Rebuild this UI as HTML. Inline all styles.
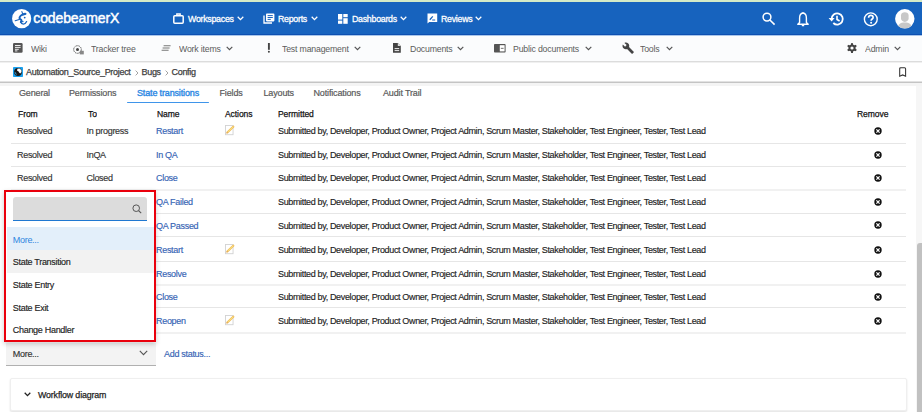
<!DOCTYPE html>
<html><head><meta charset="utf-8">
<style>
*{box-sizing:border-box;margin:0;padding:0}
html,body{width:922px;height:412px;overflow:hidden;background:#fff}
body{position:relative;font-family:"Liberation Sans",sans-serif;font-size:9px;color:#333}
.a{position:absolute}
.t{position:absolute;white-space:nowrap;font-size:9px;line-height:12px;letter-spacing:-0.3px}
.b{letter-spacing:-0.3px;-webkit-text-stroke-width:0.25px}
svg{position:absolute;overflow:visible}
#green{left:0;top:0;width:922px;height:2px;background:#d4eac7}
#hdr{left:0;top:2px;width:922px;height:32px;background:#1763be}
.hn{color:#fff;font-size:9.8px;letter-spacing:-0.3px;-webkit-text-stroke:0.3px #fff;transform:scaleX(0.9);transform-origin:0 50%}
.n2{color:#5c5c5c;font-size:9.5px;letter-spacing:-0.2px;transform:scaleX(0.92);transform-origin:0 50%}
.tab{color:#5a5a5a;letter-spacing:-0.15px;-webkit-text-stroke-width:0.2px}
.th{color:#111;font-size:9.5px;letter-spacing:-0.1px;transform:scaleX(0.9);transform-origin:0 50%}
.rw{color:#333;-webkit-text-stroke-width:0.15px}
.lk{color:#3563b4;-webkit-text-stroke-width:0.15px}
.sep{position:absolute;left:11px;width:895px;height:1px;background:#e6e6e6}
</style></head><body>
<div class="a" id="green"></div>
<div class="a" id="hdr"></div>
<div class="a" style="left:0;top:34px;width:922px;height:1px;background:#0d4fb0"></div>
<div class="a" style="left:0;top:35px;width:922px;height:1px;background:#a9c6ea"></div>

<!-- logo -->
<svg style="left:12.3px;top:9.1px" width="19.3" height="19.3" viewBox="0 0 19.3 19.3">
 <circle cx="9.65" cy="9.65" r="9.6" fill="#fff"/>
 <g fill="none" stroke="#1763be" stroke-linecap="round">
  <ellipse cx="12" cy="5.2" rx="2.6" ry="1.2" transform="rotate(-12 12 5.2)" fill="#1763be" stroke="none"/>
  <path d="M9.9 2.6 L10.5 4.4" stroke-width="1.1"/>
  <path d="M10.6 5.6 C7.6 6.8 6.6 9.4 8.6 10.4 C10.2 11.2 9.4 12.2 8.8 13" stroke-width="1.9"/>
  <path d="M8.8 13 C9.6 15.8 13 16.2 14.6 12.6" stroke-width="1.3"/>
  <path d="M7.2 10.4 L3.2 11.8" stroke-width="1.1"/>
 </g>
 <circle cx="12.7" cy="8.6" r="0.9" fill="#1763be"/>
 <circle cx="10.8" cy="12.6" r="0.8" fill="#1763be"/>
</svg>
<div class="t" style="left:33.3px;top:9.1px;font-size:14px;line-height:18px;color:#fff;letter-spacing:-0.12px;-webkit-text-stroke:0.45px #fff">codebeamerX</div>

<!-- header nav -->
<svg style="left:173px;top:13px" width="11" height="11" viewBox="0 0 11 11"><rect x="0.8" y="2.8" width="9.4" height="7.4" rx="1" fill="none" stroke="#fff" stroke-width="1.5"/><path d="M3.8 2.8 V1 H7.2 V2.8" fill="none" stroke="#fff" stroke-width="1.3"/></svg>
<div class="t hn" style="left:188px;top:13.0px">Workspaces</div>
<svg style="left:236.6px;top:15.9px" width="7" height="5" viewBox="0 0 7 5"><path d="M0.7 0.8 L3.5 3.6 L6.3 0.8" fill="none" stroke="#fff" stroke-width="1.3"/></svg>

<svg style="left:263px;top:13px" width="12" height="11" viewBox="0 0 12 11"><path d="M1 2.5 V10 H9" fill="none" stroke="#fff" stroke-width="1.3"/><rect x="3" y="0.6" width="8.4" height="7.8" rx="0.8" fill="#fff"/><path d="M4.6 2.6 H9.8 M4.6 4.5 H9.8 M4.6 6.4 H7.8" stroke="#1763be" stroke-width="1"/></svg>
<div class="t hn" style="left:278px;top:13.0px">Reports</div>
<svg style="left:310.6px;top:15.9px" width="7" height="5" viewBox="0 0 7 5"><path d="M0.7 0.8 L3.5 3.6 L6.3 0.8" fill="none" stroke="#fff" stroke-width="1.3"/></svg>

<svg style="left:338px;top:14px" width="10" height="10" viewBox="0 0 10 10"><rect x="0" y="0" width="4.3" height="5.6" fill="#fff"/><rect x="0" y="6.6" width="4.3" height="3.2" fill="#fff"/><rect x="5.3" y="0" width="4.4" height="3.2" fill="#fff"/><rect x="5.3" y="4.2" width="4.4" height="5.6" fill="#fff"/></svg>
<div class="t hn" style="left:352px;top:13.0px">Dashboards</div>
<svg style="left:399.6px;top:15.9px" width="7" height="5" viewBox="0 0 7 5"><path d="M0.7 0.8 L3.5 3.6 L6.3 0.8" fill="none" stroke="#fff" stroke-width="1.3"/></svg>

<svg style="left:427px;top:13px" width="11" height="11" viewBox="0 0 11 11"><path d="M0.5 0.5 H10.2 V9 H2.2 L0.5 10.6 Z" fill="#fff"/><path d="M2.8 6.8 L5.8 3.4" stroke="#1763be" stroke-width="1.3"/><path d="M5.2 7 H8.2" stroke="#1763be" stroke-width="1"/></svg>
<div class="t hn" style="left:441px;top:13.0px">Reviews</div>
<svg style="left:474.6px;top:15.9px" width="7" height="5" viewBox="0 0 7 5"><path d="M0.7 0.8 L3.5 3.6 L6.3 0.8" fill="none" stroke="#fff" stroke-width="1.3"/></svg>

<!-- right header icons -->
<svg style="left:762px;top:12px" width="14" height="14" viewBox="0 0 14 14"><circle cx="5" cy="5.1" r="3.9" fill="none" stroke="#fff" stroke-width="1.5"/><path d="M7.9 8 L12.6 12.6" stroke="#fff" stroke-width="1.6"/></svg>
<svg style="left:797px;top:11.5px" width="12" height="15" viewBox="0 0 12 15"><path d="M6 1 C3.2 1.5 2.6 3.5 2.6 6 V10.6 L0.8 12.2 H11.2 L9.4 10.6 V6 C9.4 3.5 8.8 1.5 6 1 Z" fill="none" stroke="#fff" stroke-width="1.4" stroke-linejoin="round"/><path d="M4.8 13.6 H7.2" stroke="#fff" stroke-width="1.3"/><circle cx="6" cy="1" r="0.8" fill="#fff"/></svg>
<svg style="left:828px;top:12px" width="17" height="14" viewBox="0 0 17 14"><path d="M3.6 7 A5.6 5.6 0 1 1 5.3 11" fill="none" stroke="#fff" stroke-width="1.8"/><path d="M0.6 6 L3.6 9.4 L6.6 6 Z" fill="#fff"/><path d="M9 3.8 V7.5 L11.6 9" fill="none" stroke="#fff" stroke-width="1.6"/></svg>
<svg style="left:863px;top:11.5px" width="16" height="15" viewBox="0 0 16 15"><circle cx="7.8" cy="7.3" r="6.4" fill="none" stroke="#fff" stroke-width="1.4"/><path d="M5.6 5.7 C5.6 3.9 6.7 3.3 7.8 3.3 C9.1 3.3 10.1 4.1 10.1 5.4 C10.1 7 8.1 7 8.1 8.8" fill="none" stroke="#fff" stroke-width="1.7"/><circle cx="8.1" cy="10.7" r="1" fill="#fff"/></svg>
<svg style="left:894.8px;top:8.8px" width="19.6" height="19.6" viewBox="0 0 19.6 19.6"><defs><clipPath id="av"><circle cx="9.8" cy="9.8" r="9.7"/></clipPath></defs><circle cx="9.8" cy="9.8" r="9.7" fill="#fff"/><g clip-path="url(#av)" fill="#c8c8c8"><path d="M6 6.6 C6 3.9 7.7 3.2 9.8 3.2 C11.9 3.2 13.6 3.9 13.6 6.6 V9.6 C13.6 11.4 12 13 9.8 13 C7.6 13 6 11.4 6 9.6 Z"/><path d="M2.6 19.6 C2.8 15.2 5.2 13.4 9.8 13.4 C14.4 13.4 16.8 15.2 17 19.6 Z"/></g></svg>

<!-- second nav -->
<div class="a" style="left:0;top:36px;width:922px;height:25px;background:#fbfcfd"></div>
<div class="a" style="left:0;top:61px;width:922px;height:1px;background:#dcdcdc"></div>
<div class="a" style="left:0;top:62px;width:922px;height:1px;background:#f0f0f0"></div>

<svg style="left:13px;top:43px" width="10" height="10" viewBox="0 0 10 10"><rect x="0" y="0" width="9.6" height="9.8" rx="1.2" fill="#555"/><path d="M2 2.5 H7.6 M2 4.4 H7.6 M2 6.3 H5.8 M2 7.9 H4.4" stroke="#fff" stroke-width="0.9"/></svg>
<div class="t n2" style="left:31px;top:42.8px">Wiki</div>
<svg style="left:73px;top:44.5px" width="12" height="10" viewBox="0 0 12 10"><circle cx="4.5" cy="4.5" r="3.8" fill="none" stroke="#555" stroke-width="1" stroke-dasharray="1.5 0.8"/><circle cx="4.5" cy="4.5" r="1.5" fill="#444"/><rect x="6.8" y="5.8" width="4" height="3.6" fill="#888"/></svg>
<div class="t n2" style="left:90.5px;top:42.8px">Tracker tree</div>
<svg style="left:161px;top:45px" width="11" height="7" viewBox="0 0 11 7"><path d="M2.6 0.8 H9.6 M1.6 3 H8.6 M0.6 5.2 H7.6" stroke="#777" stroke-width="1.1"/></svg>
<div class="t n2" style="left:179px;top:42.8px">Work items</div>
<svg style="left:226px;top:45.7px" width="7" height="5" viewBox="0 0 7 5"><path d="M0.7 0.8 L3.5 3.6 L6.3 0.8" fill="none" stroke="#555" stroke-width="1.2"/></svg>
<svg style="left:267px;top:43px" width="4" height="10" viewBox="0 0 4 10"><path d="M1.9 0 V6.8" stroke="#444" stroke-width="1.9"/><circle cx="1.9" cy="8.8" r="1" fill="#444"/></svg>
<div class="t n2" style="left:282px;top:42.8px">Test management</div>
<svg style="left:354px;top:45.7px" width="7" height="5" viewBox="0 0 7 5"><path d="M0.7 0.8 L3.5 3.6 L6.3 0.8" fill="none" stroke="#555" stroke-width="1.2"/></svg>
<svg style="left:393px;top:43px" width="8" height="10" viewBox="0 0 8 10"><path d="M0 0 H4.8 L7.8 3 V9.8 H0 Z" fill="#444"/><path d="M4.8 0 V3 H7.8" fill="#ddd"/><path d="M1.6 5.6 H6.2 M1.6 7.6 H6.2" stroke="#fff" stroke-width="0.9"/></svg>
<div class="t n2" style="left:409.5px;top:42.8px">Documents</div>
<svg style="left:457px;top:45.7px" width="7" height="5" viewBox="0 0 7 5"><path d="M0.7 0.8 L3.5 3.6 L6.3 0.8" fill="none" stroke="#555" stroke-width="1.2"/></svg>
<svg style="left:494px;top:44px" width="12" height="9" viewBox="0 0 12 9"><rect x="0" y="0" width="11.6" height="8.6" rx="0.8" fill="#555"/><rect x="5.8" y="1.2" width="4.8" height="6.2" fill="#fff"/><path d="M6.8 4.4 H9.6" stroke="#888" stroke-width="1.2"/></svg>
<div class="t n2" style="left:513px;top:42.8px">Public documents</div>
<svg style="left:585px;top:45.7px" width="7" height="5" viewBox="0 0 7 5"><path d="M0.7 0.8 L3.5 3.6 L6.3 0.8" fill="none" stroke="#555" stroke-width="1.2"/></svg>
<svg style="left:621.6px;top:42px" width="12.4" height="12.4" viewBox="0 0 24 24"><g transform="scale(1)"><path d="M22.7 19l-9.1-9.1c.9-2.3.4-5-1.5-6.9-2-2-5-2.4-7.4-1.3L9 6 6 9 1.6 4.7C.4 7.1.9 10.1 2.9 12.1c1.9 1.9 4.6 2.4 6.9 1.5l9.1 9.1c.4.4 1 .4 1.4 0l2.3-2.3c.5-.4.5-1.1.1-1.4z" fill="#444"/></g></svg>
<div class="t n2" style="left:640px;top:42.8px">Tools</div>
<svg style="left:666px;top:45.7px" width="7" height="5" viewBox="0 0 7 5"><path d="M0.7 0.8 L3.5 3.6 L6.3 0.8" fill="none" stroke="#555" stroke-width="1.2"/></svg>
<svg style="left:847px;top:43px" width="10" height="10" viewBox="0 0 10 10"><g fill="#444"><circle cx="5" cy="5" r="3.6"/><rect x="4" y="0" width="2" height="10" rx="0.6"/><rect x="4" y="0" width="2" height="10" rx="0.6" transform="rotate(60 5 5)"/><rect x="4" y="0" width="2" height="10" rx="0.6" transform="rotate(120 5 5)"/></g><circle cx="5" cy="5" r="1.6" fill="#fbfcfd"/></svg>
<div class="t n2" style="left:865px;top:42.8px">Admin</div>
<svg style="left:894px;top:45.7px" width="7" height="5" viewBox="0 0 7 5"><path d="M0.7 0.8 L3.5 3.6 L6.3 0.8" fill="none" stroke="#555" stroke-width="1.2"/></svg>

<!-- breadcrumb -->
<svg style="left:13px;top:66.5px" width="10" height="10" viewBox="0 0 10 10"><rect x="0" y="0" width="10" height="10" rx="0.8" fill="#1aa0ee"/><circle cx="5" cy="5" r="3.9" fill="#1a1a1a"/><path d="M4.4 1.7 L6.4 1.5 L8.3 3.1 L8.5 5.1 L7.2 6.6 L6.1 5.6 L5.4 4.3 L4.1 3.7 Z" fill="#fff"/><path d="M2.1 5.2 L3.3 7.6" stroke="#3ab0f0" stroke-width="0.9"/></svg>
<div class="t b" style="left:26px;top:65.9px;color:#404040">Automation_Source_Project</div>
<svg style="left:135px;top:69.5px" width="4" height="6" viewBox="0 0 4 6"><path d="M0.6 0.6 L3 3 L0.6 5.4" fill="none" stroke="#999" stroke-width="0.9"/></svg>
<div class="t b" style="left:141.5px;top:65.9px;color:#404040">Bugs</div>
<svg style="left:165px;top:69.5px" width="4" height="6" viewBox="0 0 4 6"><path d="M0.6 0.6 L3 3 L0.6 5.4" fill="none" stroke="#999" stroke-width="0.9"/></svg>
<div class="t b" style="left:171.5px;top:65.9px;color:#404040">Config</div>
<svg style="left:898.5px;top:66.8px" width="8" height="10" viewBox="0 0 8 10"><path d="M0.7 1.7 Q0.7 0.7 1.7 0.7 H5.6 Q6.6 0.7 6.6 1.7 V9.2 L3.65 7.9 L0.7 9.2 Z" fill="none" stroke="#333" stroke-width="1.05"/></svg>
<div class="a" style="left:0;top:81px;width:922px;height:1px;background:#e2e2e2"></div><div class="a" style="left:0;top:82px;width:922px;height:1px;background:#c4c4c4"></div>
<div class="a" style="left:0;top:83px;width:922px;height:3px;background:#f4f4f4"></div>

<!-- tabs -->
<div class="t tab" style="left:19px;top:86.5px">General</div>
<div class="t tab" style="left:69px;top:86.5px">Permissions</div>
<div class="t tab" style="left:137px;top:86.5px;color:#2a87e3;-webkit-text-stroke-width:0.35px">State transitions</div>
<div class="t tab" style="left:219.5px;top:86.5px">Fields</div>
<div class="t tab" style="left:263.5px;top:86.5px">Layouts</div>
<div class="t tab" style="left:313.5px;top:86.5px">Notifications</div>
<div class="t tab" style="left:383px;top:86.5px">Audit Trail</div>
<div class="a" style="left:126.5px;top:101.5px;width:82.5px;height:1.6px;background:#3f95ea;border-radius:1px"></div>

<!-- table header -->
<div class="t b th" style="left:18px;top:108.0px">From</div>
<div class="t b th" style="left:87.5px;top:108.0px">To</div>
<div class="t b th" style="left:157px;top:108.0px">Name</div>
<div class="t b th" style="left:224.5px;top:108.0px">Actions</div>
<div class="t b th" style="left:278px;top:108.0px">Permitted</div>
<div class="t b th" style="left:856.5px;top:108.0px">Remove</div>

<!-- rows -->
<div class="t rw" style="left:17px;top:125.1px">Resolved</div>
<div class="t rw" style="left:86.5px;top:125.1px">In progress</div>
<div class="t lk" style="left:156px;top:125.1px">Restart</div>
<svg style="left:225px;top:125.0px" width="10" height="10" viewBox="0 0 10 10"><rect x="0.45" y="0.5" width="7.6" height="9.2" fill="#fff" stroke="#d2d2d2" stroke-width="0.9"/><path d="M2.3 7.5 L8.3 1.7" stroke="#f0bf62" stroke-width="2.2" stroke-linecap="round"/><path d="M2.6 7.2 L8 2" stroke="#fae27c" stroke-width="1" stroke-linecap="round"/><path d="M1.5 8.3 L2.6 7.2" stroke="#d9a060" stroke-width="1"/></svg>
<div class="t rw" style="left:278px;top:125.1px;color:#222;letter-spacing:-0.35px">Submitted by, Developer, Product Owner, Project Admin, Scrum Master, Stakeholder, Test Engineer, Tester, Test Lead</div>
<svg style="left:874.2px;top:127.0px" width="8" height="8" viewBox="0 0 8 8"><circle cx="4" cy="4" r="3.7" fill="#111"/><path d="M2.4 2.4 L5.6 5.6 M5.6 2.4 L2.4 5.6" stroke="#fff" stroke-width="1.25"/></svg>
<div class="sep" style="top:143px"></div>
<div class="t rw" style="left:17px;top:149.1px">Resolved</div>
<div class="t rw" style="left:86.5px;top:149.1px">InQA</div>
<div class="t lk" style="left:156px;top:149.1px">In QA</div>
<div class="t rw" style="left:278px;top:149.1px;color:#222;letter-spacing:-0.35px">Submitted by, Developer, Product Owner, Project Admin, Scrum Master, Stakeholder, Test Engineer, Tester, Test Lead</div>
<svg style="left:874.2px;top:151.0px" width="8" height="8" viewBox="0 0 8 8"><circle cx="4" cy="4" r="3.7" fill="#111"/><path d="M2.4 2.4 L5.6 5.6 M5.6 2.4 L2.4 5.6" stroke="#fff" stroke-width="1.25"/></svg>
<div class="sep" style="top:166px"></div>
<div class="t rw" style="left:17px;top:172.4px">Resolved</div>
<div class="t rw" style="left:86.5px;top:172.4px">Closed</div>
<div class="t lk" style="left:156px;top:172.4px">Close</div>
<div class="t rw" style="left:278px;top:172.4px;color:#222;letter-spacing:-0.35px">Submitted by, Developer, Product Owner, Project Admin, Scrum Master, Stakeholder, Test Engineer, Tester, Test Lead</div>
<svg style="left:874.2px;top:174.3px" width="8" height="8" viewBox="0 0 8 8"><circle cx="4" cy="4" r="3.7" fill="#111"/><path d="M2.4 2.4 L5.6 5.6 M5.6 2.4 L2.4 5.6" stroke="#fff" stroke-width="1.25"/></svg>
<div class="sep" style="top:189px;height:2px;background:#f1f1f1"></div>
<div class="t lk" style="left:156px;top:195.9px">QA Failed</div>
<div class="t rw" style="left:278px;top:195.9px;color:#222;letter-spacing:-0.35px">Submitted by, Developer, Product Owner, Project Admin, Scrum Master, Stakeholder, Test Engineer, Tester, Test Lead</div>
<svg style="left:874.2px;top:197.8px" width="8" height="8" viewBox="0 0 8 8"><circle cx="4" cy="4" r="3.7" fill="#111"/><path d="M2.4 2.4 L5.6 5.6 M5.6 2.4 L2.4 5.6" stroke="#fff" stroke-width="1.25"/></svg>
<div class="sep" style="top:213px"></div>
<div class="t lk" style="left:156px;top:219.5px">QA Passed</div>
<div class="t rw" style="left:278px;top:219.5px;color:#222;letter-spacing:-0.35px">Submitted by, Developer, Product Owner, Project Admin, Scrum Master, Stakeholder, Test Engineer, Tester, Test Lead</div>
<svg style="left:874.2px;top:221.4px" width="8" height="8" viewBox="0 0 8 8"><circle cx="4" cy="4" r="3.7" fill="#111"/><path d="M2.4 2.4 L5.6 5.6 M5.6 2.4 L2.4 5.6" stroke="#fff" stroke-width="1.25"/></svg>
<div class="sep" style="top:236px"></div>
<div class="t lk" style="left:156px;top:243.6px">Restart</div>
<svg style="left:225px;top:243.5px" width="10" height="10" viewBox="0 0 10 10"><rect x="0.45" y="0.5" width="7.6" height="9.2" fill="#fff" stroke="#d2d2d2" stroke-width="0.9"/><path d="M2.3 7.5 L8.3 1.7" stroke="#f0bf62" stroke-width="2.2" stroke-linecap="round"/><path d="M2.6 7.2 L8 2" stroke="#fae27c" stroke-width="1" stroke-linecap="round"/><path d="M1.5 8.3 L2.6 7.2" stroke="#d9a060" stroke-width="1"/></svg>
<div class="t rw" style="left:278px;top:243.6px;color:#222;letter-spacing:-0.35px">Submitted by, Developer, Product Owner, Project Admin, Scrum Master, Stakeholder, Test Engineer, Tester, Test Lead</div>
<svg style="left:874.2px;top:245.5px" width="8" height="8" viewBox="0 0 8 8"><circle cx="4" cy="4" r="3.7" fill="#111"/><path d="M2.4 2.4 L5.6 5.6 M5.6 2.4 L2.4 5.6" stroke="#fff" stroke-width="1.25"/></svg>
<div class="sep" style="top:261px"></div>
<div class="t lk" style="left:156px;top:267.7px">Resolve</div>
<div class="t rw" style="left:278px;top:267.7px;color:#222;letter-spacing:-0.35px">Submitted by, Developer, Product Owner, Project Admin, Scrum Master, Stakeholder, Test Engineer, Tester, Test Lead</div>
<svg style="left:874.2px;top:269.6px" width="8" height="8" viewBox="0 0 8 8"><circle cx="4" cy="4" r="3.7" fill="#111"/><path d="M2.4 2.4 L5.6 5.6 M5.6 2.4 L2.4 5.6" stroke="#fff" stroke-width="1.25"/></svg>
<div class="sep" style="top:284px;height:2px;background:#f1f1f1"></div>
<div class="t lk" style="left:156px;top:290.7px">Close</div>
<div class="t rw" style="left:278px;top:290.7px;color:#222;letter-spacing:-0.35px">Submitted by, Developer, Product Owner, Project Admin, Scrum Master, Stakeholder, Test Engineer, Tester, Test Lead</div>
<svg style="left:874.2px;top:292.6px" width="8" height="8" viewBox="0 0 8 8"><circle cx="4" cy="4" r="3.7" fill="#111"/><path d="M2.4 2.4 L5.6 5.6 M5.6 2.4 L2.4 5.6" stroke="#fff" stroke-width="1.25"/></svg>
<div class="sep" style="top:307px"></div>
<div class="t lk" style="left:156px;top:314.7px">Reopen</div>
<svg style="left:225px;top:314.6px" width="10" height="10" viewBox="0 0 10 10"><rect x="0.45" y="0.5" width="7.6" height="9.2" fill="#fff" stroke="#d2d2d2" stroke-width="0.9"/><path d="M2.3 7.5 L8.3 1.7" stroke="#f0bf62" stroke-width="2.2" stroke-linecap="round"/><path d="M2.6 7.2 L8 2" stroke="#fae27c" stroke-width="1" stroke-linecap="round"/><path d="M1.5 8.3 L2.6 7.2" stroke="#d9a060" stroke-width="1"/></svg>
<div class="t rw" style="left:278px;top:314.7px;color:#222;letter-spacing:-0.35px">Submitted by, Developer, Product Owner, Project Admin, Scrum Master, Stakeholder, Test Engineer, Tester, Test Lead</div>
<svg style="left:874.2px;top:316.6px" width="8" height="8" viewBox="0 0 8 8"><circle cx="4" cy="4" r="3.7" fill="#111"/><path d="M2.4 2.4 L5.6 5.6 M5.6 2.4 L2.4 5.6" stroke="#fff" stroke-width="1.25"/></svg>
<div class="sep" style="top:332px;height:2px;background:#f1f1f1"></div>

<!-- below table -->
<div class="a" style="left:6px;top:343px;width:150px;height:23px;background:#f3f3f3;border-bottom:1px solid #b0b0b0"></div>
<div class="t rw" style="left:12.8px;top:347.6px;color:#333">More...</div>
<svg style="left:139px;top:349.8px" width="9" height="6" viewBox="0 0 9 6"><path d="M0.8 0.8 L4.5 4.6 L8.2 0.8" fill="none" stroke="#555" stroke-width="1.1"/></svg>
<div class="t lk" style="left:164px;top:347.9px">Add status...</div>

<div class="a" style="left:10px;top:377.5px;width:896.5px;height:33.5px;background:#fff;border:1px solid #efefef;border-radius:2px;box-shadow:0 1px 2px rgba(0,0,0,0.12)"></div>
<svg style="left:23.7px;top:392.3px" width="7" height="5" viewBox="0 0 7 5"><path d="M0.7 0.8 L3.5 3.6 L6.3 0.8" fill="none" stroke="#222" stroke-width="1.3"/></svg>
<div class="t rw" style="left:38px;top:389.0px;color:#222;-webkit-text-stroke:0.25px #222;font-size:9.5px;letter-spacing:-0.15px;transform:scaleX(0.93);transform-origin:0 50%">Workflow diagram</div>

<!-- scrollbar -->
<div class="a" style="left:916px;top:0;width:6px;height:412px;background:#f1f1f1;display:none"></div>
<div class="a" style="left:916px;top:86px;width:6px;height:326px;background:#f6f6f6"></div>
<div class="a" style="left:917px;top:243px;width:5px;height:169px;background:#c1c1c1;border-radius:3px 0 0 0"></div>

<!-- dropdown overlay -->
<div class="a" style="left:4.3px;top:190px;width:151.7px;height:151.7px;background:#fff;border:2px solid #ea000c;box-shadow:0 2px 5px rgba(0,0,0,0.2)"></div>
<div class="a" style="left:12.5px;top:197px;width:134.5px;height:24px;background:#dcdcdc;border-radius:3px 3px 0 0;border-bottom:1.5px solid #1f78d1"></div>
<svg style="left:132px;top:204px" width="10" height="10" viewBox="0 0 10 10"><circle cx="4.2" cy="4.2" r="3.3" fill="none" stroke="#555" stroke-width="1"/><path d="M6.6 6.6 L9.2 9.2" stroke="#555" stroke-width="1.1"/></svg>
<div class="a" style="left:6.5px;top:227px;width:147px;height:23px;background:#e3effa"></div>
<div class="t" style="left:12.8px;top:233.5px;color:#2f86e0">More...</div>
<div class="a" style="left:6.5px;top:250px;width:147px;height:23px;background:#f2f2f2"></div>
<div class="t" style="left:12.8px;top:255.9px;color:#222;-webkit-text-stroke-width:0.15px">State Transition</div>
<div class="t" style="left:12.8px;top:278.9px;color:#222;-webkit-text-stroke-width:0.15px">State Entry</div>
<div class="t" style="left:12.8px;top:301.6px;color:#222;-webkit-text-stroke-width:0.15px">State Exit</div>
<div class="t" style="left:12.8px;top:324.1px;color:#222;-webkit-text-stroke-width:0.15px">Change Handler</div>
</body></html>
